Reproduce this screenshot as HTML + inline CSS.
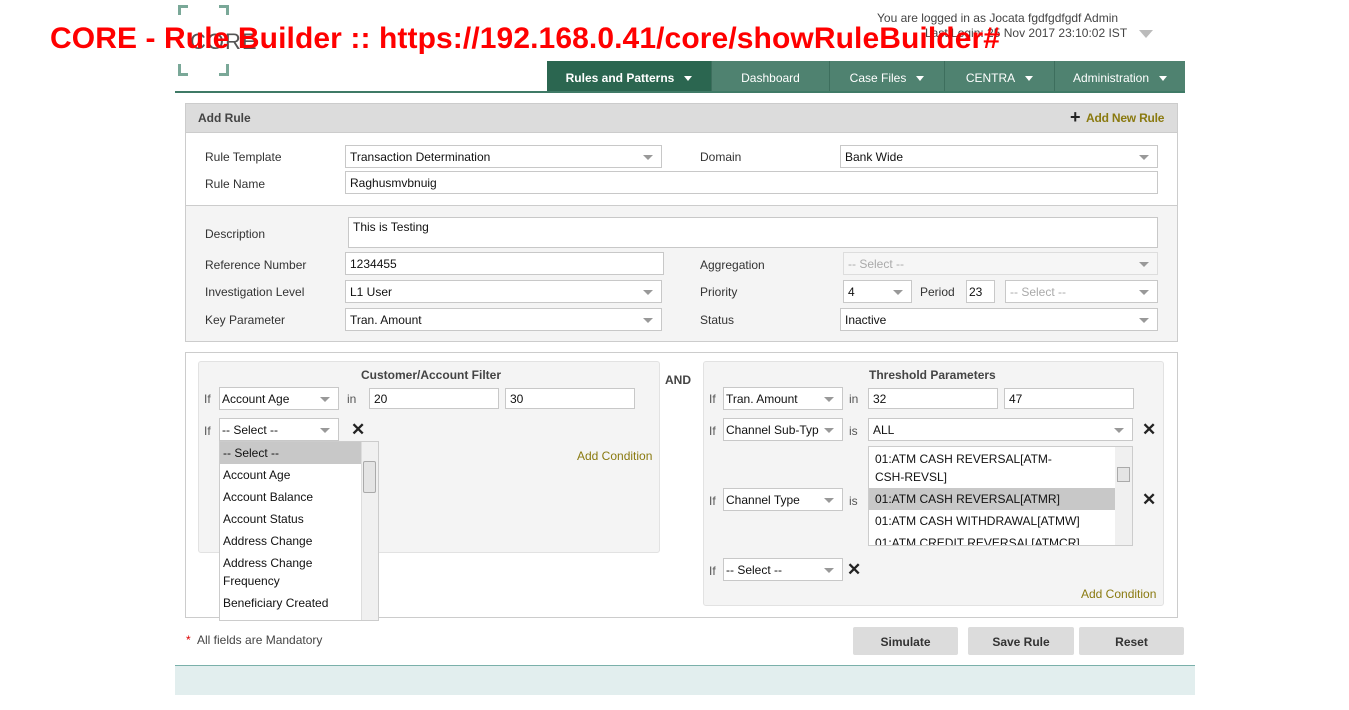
<!DOCTYPE html>
<html><head><style>
*{box-sizing:border-box;margin:0;padding:0}
body{width:1349px;height:710px;background:#fff;font-family:"Liberation Sans",Arial,sans-serif;font-size:12px;color:#333;position:relative;overflow:hidden}
.a{position:absolute}
.f{position:absolute;background:#fff;border:1px solid #c8c8c8;height:23px;line-height:23px;padding-left:4px;color:#111;white-space:nowrap;overflow:hidden}
.s::after{content:"";position:absolute;right:8px;top:9px;border-left:5px solid transparent;border-right:5px solid transparent;border-top:5px solid #999}
.l{position:absolute;color:#333}
.x{position:absolute;font-weight:bold;font-size:17px;color:#222}
.nav{position:absolute;top:61px;height:30px;line-height:35px;color:#fff;font-size:12px;background:#4f8270;text-align:center;border-right:1px solid #3d6e5d}
.nav i{display:inline-block;border-left:4px solid transparent;border-right:4px solid transparent;border-top:5px solid #fff;margin-left:10px;vertical-align:1px}
.btn{position:absolute;top:627px;height:28px;line-height:30px;background:#dcdcdc;text-align:center;color:#333;font-weight:bold;border-radius:2px}
.opt{height:22px;line-height:23px;padding-left:3px;color:#111}
</style></head><body>
<div class="a" style="left:178px;top:5px;width:10px;height:10px;border-left:3px solid #7aa898;border-top:3px solid #7aa898"></div>
<div class="a" style="left:219px;top:5px;width:10px;height:10px;border-right:3px solid #7aa898;border-top:3px solid #7aa898"></div>
<div class="a" style="left:178px;top:64px;width:10px;height:12px;border-left:3px solid #7aa898;border-bottom:3px solid #7aa898"></div>
<div class="a" style="left:219px;top:64px;width:10px;height:12px;border-right:3px solid #7aa898;border-bottom:3px solid #7aa898"></div>
<div class="a" style="left:190px;top:29px;font-size:22px;color:#555;letter-spacing:1px">CORE</div>
<div class="a" style="left:877px;top:11px;font-size:12px;color:#444">You are logged in as Jocata fgdfgdfgdf Admin</div>
<div class="a" style="left:925px;top:26px;font-size:12px;color:#444">Last Login: 25 Nov 2017 23:10:02 IST</div>
<div class="a" style="left:1139px;top:30px;border-left:7px solid transparent;border-right:7px solid transparent;border-top:8px solid #bbb"></div>
<div class="a" style="left:50px;top:22px;font-size:30px;font-weight:bold;color:#f00;white-space:nowrap;letter-spacing:0.1px">CORE - Rule Builder :: https://192.168.0.41/core/showRuleBuilder#</div>
<div class="nav" style="left:547px;width:165px;background:#2b6650;font-weight:bold">Rules and Patterns<i></i></div>
<div class="nav" style="left:712px;width:118px">Dashboard</div>
<div class="nav" style="left:830px;width:115px">Case Files<i></i></div>
<div class="nav" style="left:945px;width:110px">CENTRA<i></i></div>
<div class="nav" style="left:1055px;width:130px;border-right:0">Administration<i></i></div>
<div class="a" style="left:175px;top:91px;width:1010px;height:2px;background:#3f7a66"></div>
<div class="a" style="left:185px;top:103px;width:993px;height:30px;background:#dcdcdc;border:1px solid #ccc"></div>
<div class="a" style="left:198px;top:111px;font-weight:bold;color:#444">Add Rule</div>
<div class="a" style="left:1070px;top:107px;font-size:18px;font-weight:bold;color:#222">+</div>
<div class="a" style="left:1086px;top:111px;font-weight:bold;color:#8a7a10;letter-spacing:-0.2px">Add New Rule</div>
<div class="a" style="left:185px;top:132px;width:993px;height:74px;border:1px solid #ccc;border-top:0"></div>
<div class="l" style="left:205px;top:150px">Rule Template</div>
<div class="f s" style="left:345px;top:145px;width:317px">Transaction Determination</div>
<div class="l" style="left:700px;top:150px">Domain</div>
<div class="f s" style="left:840px;top:145px;width:318px">Bank Wide</div>
<div class="l" style="left:205px;top:177px">Rule Name</div>
<div class="f" style="left:345px;top:171px;width:813px">Raghusmvbnuig</div>
<div class="a" style="left:185px;top:205px;width:993px;height:137px;border:1px solid #ccc;background:#f4f4f4"></div>
<div class="l" style="left:205px;top:227px">Description</div>
<div class="f" style="left:348px;top:217px;width:810px;height:31px;line-height:16px;padding-top:1px">This is Testing</div>
<div class="l" style="left:205px;top:258px">Reference Number</div>
<div class="f" style="left:345px;top:252px;width:319px">1234455</div>
<div class="l" style="left:700px;top:258px">Aggregation</div>
<div class="f s" style="left:843px;top:252px;width:315px;background:#f6f6f6;color:#aaa;border-color:#ddd">-- Select --</div>
<div class="l" style="left:205px;top:285px">Investigation Level</div>
<div class="f s" style="left:345px;top:280px;width:317px">L1 User</div>
<div class="l" style="left:700px;top:285px">Priority</div>
<div class="f s" style="left:843px;top:280px;width:69px">4</div>
<div class="l" style="left:920px;top:285px">Period</div>
<div class="f" style="left:966px;top:280px;width:29px;padding-left:2px">23</div>
<div class="f s" style="left:1005px;top:280px;width:153px;color:#aaa">-- Select --</div>
<div class="l" style="left:205px;top:313px">Key Parameter</div>
<div class="f s" style="left:345px;top:308px;width:317px">Tran. Amount</div>
<div class="l" style="left:700px;top:313px">Status</div>
<div class="f s" style="left:840px;top:308px;width:318px">Inactive</div>
<div class="a" style="left:185px;top:352px;width:993px;height:266px;border:1px solid #ccc"></div>
<div class="a" style="left:198px;top:361px;width:462px;height:192px;background:#f4f4f4;border:1px solid #e2e2e2;border-radius:3px"></div>
<div class="a" style="left:361px;top:368px;font-weight:bold;color:#444">Customer/Account Filter</div>
<div class="a" style="left:665px;top:373px;font-weight:bold;color:#444">AND</div>
<div class="l" style="left:204px;top:392px;color:#555">If</div>
<div class="f s" style="left:219px;top:387px;width:120px;padding-left:2px">Account Age</div>
<div class="l" style="left:347px;top:392px;color:#555">in</div>
<div class="f" style="left:369px;top:388px;width:130px;height:21px;line-height:21px">20</div>
<div class="f" style="left:505px;top:388px;width:130px;height:21px;line-height:21px">30</div>
<div class="l" style="left:204px;top:424px;color:#555">If</div>
<div class="f s" style="left:219px;top:418px;width:120px;padding-left:2px">-- Select --</div>
<div class="x" style="left:351px;top:420px">✕</div>
<div class="a" style="left:577px;top:449px;color:#8a7a10">Add Condition</div>
<div class="a" style="left:219px;top:441px;width:160px;height:180px;background:#fff;border:1px solid #ccc;overflow:hidden">
 <div style="width:141px">
 <div class="opt" style="background:#c8c8c8">-- Select --</div>
 <div class="opt">Account Age</div><div class="opt">Account Balance</div><div class="opt">Account Status</div><div class="opt">Address Change</div>
 <div class="opt" style="height:40px;line-height:18px;padding-top:2px">Address Change<br>Frequency</div>
 <div class="opt">Beneficiary Created</div></div>
 <div class="a" style="left:141px;top:0;width:17px;height:180px;background:#f0f0f0;border-left:1px solid #ddd"></div>
 <div class="a" style="left:143px;top:19px;width:13px;height:32px;background:#e4e4e4;border:1px solid #aaa;border-radius:2px"></div>
</div>
<div class="a" style="left:703px;top:361px;width:461px;height:245px;background:#f4f4f4;border:1px solid #e2e2e2;border-radius:3px"></div>
<div class="a" style="left:869px;top:368px;font-weight:bold;color:#444">Threshold Parameters</div>
<div class="l" style="left:709px;top:392px;color:#555">If</div>
<div class="f s" style="left:723px;top:387px;width:120px;padding-left:2px">Tran. Amount</div>
<div class="l" style="left:849px;top:392px;color:#555">in</div>
<div class="f" style="left:868px;top:388px;width:130px;height:21px;line-height:21px">32</div>
<div class="f" style="left:1004px;top:388px;width:130px;height:21px;line-height:21px">47</div>
<div class="l" style="left:709px;top:424px;color:#555">If</div>
<div class="f s" style="left:723px;top:418px;width:120px;padding-left:2px">Channel Sub-Typ</div>
<div class="l" style="left:849px;top:424px;color:#555">is</div>
<div class="f s" style="left:868px;top:418px;width:265px">ALL</div>
<div class="x" style="left:1142px;top:420px">✕</div>
<div class="a" style="left:868px;top:446px;width:265px;height:100px;background:#fff;border:1px solid #ccc;overflow:hidden">
 <div style="width:246px;padding-top:3px">
 <div class="opt" style="height:38px;line-height:18px;padding-left:6px">01:ATM CASH REVERSAL[ATM-<br>CSH-REVSL]</div>
 <div class="opt" style="background:#c8c8c8;padding-left:6px">01:ATM CASH REVERSAL[ATMR]</div>
 <div class="opt" style="padding-left:6px">01:ATM CASH WITHDRAWAL[ATMW]</div>
 <div class="opt" style="padding-left:6px">01:ATM CREDIT REVERSAL[ATMCR]</div></div>
 <div class="a" style="left:246px;top:0;width:17px;height:100px;background:#f0f0f0"></div>
 <div class="a" style="left:248px;top:20px;width:13px;height:15px;background:#e4e4e4;border:1px solid #aaa"></div>
</div>
<div class="l" style="left:709px;top:494px;color:#555">If</div>
<div class="f s" style="left:723px;top:488px;width:120px;padding-left:2px">Channel Type</div>
<div class="l" style="left:849px;top:494px;color:#555">is</div>
<div class="x" style="left:1142px;top:490px">✕</div>
<div class="l" style="left:709px;top:564px;color:#555">If</div>
<div class="f s" style="left:723px;top:558px;width:120px;padding-left:2px">-- Select --</div>
<div class="x" style="left:847px;top:560px">✕</div>
<div class="a" style="left:1081px;top:587px;color:#8a7a10">Add Condition</div>
<div class="a" style="left:186px;top:633px;color:#d00">*</div>
<div class="a" style="left:197px;top:633px;color:#444">All fields are Mandatory</div>
<div class="btn" style="left:853px;width:105px">Simulate</div>
<div class="btn" style="left:968px;width:106px">Save Rule</div>
<div class="btn" style="left:1079px;width:105px">Reset</div>
<div class="a" style="left:175px;top:665px;width:1020px;height:30px;background:#e2eeee;border-top:1px solid #7ab0aa"></div>
</body></html>
